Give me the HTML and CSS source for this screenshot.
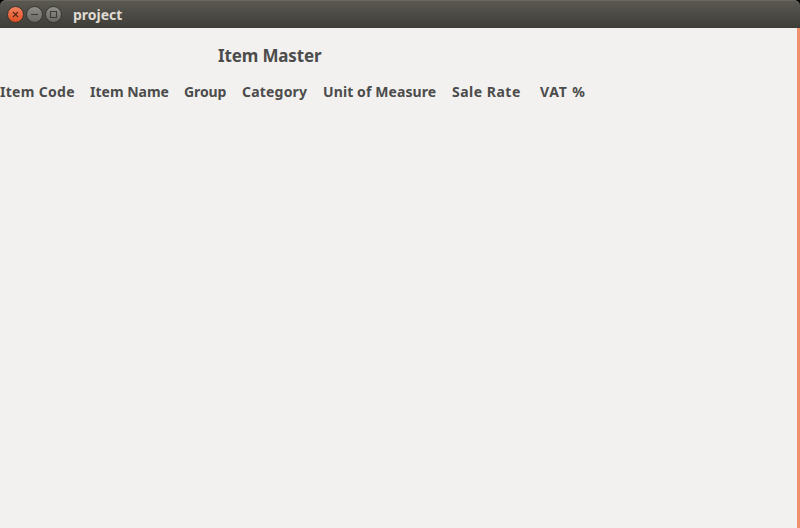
FILE: index.html
```html
<!DOCTYPE html>
<html lang="en">
<head>
<meta charset="utf-8">
<title>project</title>
<link rel="stylesheet" href="styles.css">
</head>
<body>
<div class="window">
  <header class="titlebar">
    <svg class="controls" width="55" height="18" viewBox="0 0 55 18" aria-hidden="true">
      <defs>
        <linearGradient id="close" x2="0" y2="1"><stop stop-color="#f58462"/><stop offset="1" stop-color="#df4e20"/></linearGradient>
        <linearGradient id="plain" x2="0" y2="1"><stop stop-color="#91908a"/><stop offset="1" stop-color="#686761"/></linearGradient>
      </defs>
      <g stroke="#34332e">
        <circle cx="8.5" cy="8.5" r="8" fill="url(#close)"/>
        <circle cx="27.5" cy="8.5" r="8" fill="url(#plain)"/>
        <circle cx="46.5" cy="8.5" r="8" fill="url(#plain)"/>
      </g>
      <g fill="none" stroke="#3d3b37" stroke-width="1.1">
        <path d="M6 6l5 5M11 6l-5 5" stroke="#5a2a19" stroke-width="1.3"/>
        <path d="M24 8.5h7"/>
        <path d="M43.5 5.5h6v6h-6z"/>
      </g>
    </svg>
    <span class="title">project</span>
  </header>
  <main class="content">
    <h1 class="heading">Item Master</h1>
    <div class="columns">
      <span class="code">Item Code</span>
      <span class="name">Item Name</span>
      <span class="group">Group</span>
      <span class="category">Category</span>
      <span class="unit">Unit of Measure</span>
      <span class="rate">Sale Rate</span>
      <span class="vat">VAT %</span>
    </div>
  </main>
</div>
</body>
</html>
```
FILE: styles.css
```css
* { box-sizing: border-box; }
body { margin: 0; background: #000; color: #4c4c4c; font-family: "Noto Sans", "Open Sans", sans-serif; }
.window { height: 528px; display: flex; flex-direction: column; overflow: hidden; }
.titlebar {
  height: 28px;
  flex: none;
  display: flex;
  align-items: center;
  gap: 11px;
  padding: 1px 0 0 7px;
  border-radius: 6px 6px 0 0;
  background: linear-gradient(#5b5952, #3e3d38);
  box-shadow: inset 0 1px #69675f;
}
.controls { display: block; }
.title { color: #dfdbd2; font-size: 14px; font-weight: 700; line-height: 20px; letter-spacing: 0; }
.content { flex: 1; background: #f2f1ef; border-right: 3px solid #ef8f6c; }
.heading { margin: 0; padding: 16px 0 0 218px; font-size: 17px; font-weight: 700; line-height: 24px; letter-spacing: -0.15px; white-space: nowrap; }
.columns {
  display: grid;
  grid-template-columns: 75px 79px 43px 66px 114px 73px 48px;
  column-gap: 15px;
  margin-top: 14px;
  font-size: 14px;
  font-weight: 700;
  line-height: 20px;
  white-space: nowrap;
}
.code { letter-spacing: 0.3px; }
.name { letter-spacing: 0; }
.group { letter-spacing: -0.1px; }
.category { letter-spacing: 0.2px; }
.unit { letter-spacing: 0.1px; }
.rate { letter-spacing: 0.5px; }
.vat { letter-spacing: 0.8px; }
```
